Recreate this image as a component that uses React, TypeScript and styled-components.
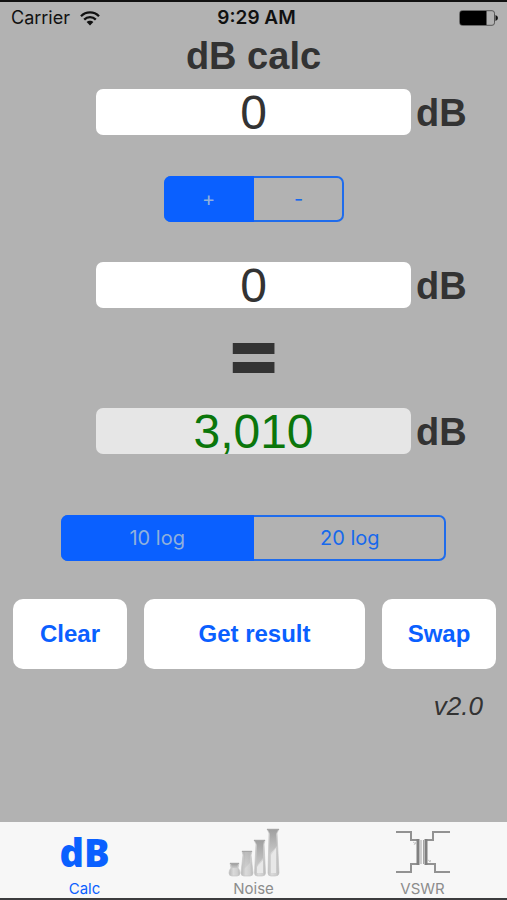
import React, { useState } from "react";
import styled, { createGlobalStyle } from "styled-components";

const blue = "#0a60ff";
const ink = "#333333";
const helvetica = `"Liberation Sans", Arial, sans-serif`;
const system = `Inter, Roboto, sans-serif`;
const humanist = `"Open Sans", "Noto Sans", sans-serif`;

const GlobalStyle = createGlobalStyle`
  * { box-sizing: border-box; }
  body { margin: 0; background: #b2b2b2; }
  button, input { font: inherit; }
`;

const Screen = styled.div`
  min-height: 100vh;
  display: flex;
  flex-direction: column;
  background: #b2b2b2;
  border-top: 2px solid #111111;
  border-bottom: 2px solid #3c3c3e;
  font-family: ${helvetica};
  color: ${ink};
`;

const StatusBar = styled.header`
  display: grid;
  grid-template-columns: 1fr auto 1fr;
  align-items: center;
  height: 32px;
  padding: 0 9px 0 11px;
  font: 400 18px/32px ${system};
  color: #111111;
`;

const Carrier = styled.div`
  display: flex;
  align-items: center;
  gap: 10px;
`;

const Clock = styled.time`
  padding-left: 4px;
  font-size: 19px;
  font-weight: 600;
`;

const BatteryIcon = styled.svg`
  justify-self: end;
`;

const Content = styled.main`
  flex: 1;
  display: flex;
  flex-direction: column;
  align-items: stretch;
`;

const Title = styled.h1`
  margin: 0;
  font-size: 38px;
  line-height: 44px;
  text-align: center;
`;

const FieldRow = styled.label`
  display: grid;
  grid-template-columns: 96fr 315fr 96fr;
  align-items: center;
  height: 46px;
`;

const ValueInput = styled.input<{ $result?: boolean }>`
  grid-column: 2;
  width: 100%;
  min-width: 0;
  height: 46px;
  padding: 0;
  border: 0;
  border-radius: 7px;
  background: ${(p) => (p.$result ? "#e6e6e6" : "#ffffff")};
  color: ${(p) => (p.$result ? "#0b760b" : ink)};
  font-size: 48px;
  line-height: 46px;
  text-align: center;
`;

const Unit = styled.span`
  padding: 2px 0 0 5px;
  font-size: 38px;
  font-weight: 700;
  line-height: 44px;
`;

const FirstField = styled.div`
  margin-top: 11px;
`;

const Equals = styled.div`
  height: 100px;
  font: 800 84px/96px ${humanist};
  text-align: center;
`;

const Segments = styled.fieldset<{ $width: string; $gap: string }>`
  display: flex;
  width: ${(p) => p.$width};
  height: 46px;
  margin: ${(p) => p.$gap};
  padding: 0;
  border: 0;
  border-radius: 7px;
  box-shadow: inset 0 0 0 2px #1f6cec;
  overflow: hidden;
`;

const Segment = styled.label<{ $active: boolean }>`
  flex: 1;
  display: flex;
  align-items: center;
  justify-content: center;
  background: ${(p) => (p.$active ? blue : "transparent")};
  color: ${(p) => (p.$active ? "#8fb0dc" : "#1769ec")};
  font: 400 20px/24px ${system};
  cursor: pointer;
`;

const SegmentInput = styled.input`
  appearance: none;
  width: 0;
  height: 0;
  margin: 0;
`;

const Actions = styled.div`
  display: grid;
  grid-template-columns: 114fr 221fr 114fr;
  column-gap: 17px;
  padding: 0 11px 0 13px;
`;

const ActionButton = styled.button`
  height: 70px;
  padding: 0;
  border: 0;
  border-radius: 10px;
  background: #ffffff;
  color: ${blue};
  font-size: 24px;
  font-weight: 700;
  cursor: pointer;
`;

const Version = styled.p`
  margin: 21px 24px 0 0;
  font-size: 26px;
  font-style: italic;
  line-height: 32px;
  text-align: right;
`;

const TabBar = styled.nav`
  display: grid;
  grid-template-columns: repeat(3, 1fr);
  height: 76px;
  background: #f7f7f7;
`;

const Tab = styled.a<{ $active?: boolean }>`
  display: flex;
  flex-direction: column;
  align-items: center;
  color: ${(p) => (p.$active ? blue : "#8c8c8c")};
  font: 400 15px/18px ${system};
  text-decoration: none;
`;

const TabIcon = styled.span`
  display: flex;
  align-items: center;
  justify-content: center;
  height: 58px;
  padding-top: 2px;
  font: 800 38px/46px ${humanist};
`;

type SwitchProps = {
  name: string;
  legend: string;
  options: string[];
  width: string;
  gap: string;
};

function Switcher({ name, legend, options, width, gap }: SwitchProps) {
  const [value, setValue] = useState(options[0]);
  return (
    <Segments $width={width} $gap={gap} aria-label={legend}>
      {options.map((option) => (
        <Segment key={option} $active={option === value}>
          <SegmentInput
            type="radio"
            name={name}
            checked={option === value}
            onChange={() => setValue(option)}
          />
          {option}
        </Segment>
      ))}
    </Segments>
  );
}

function WifiIcon() {
  return (
    <svg width="20" height="15" viewBox="0 0 20 15" aria-hidden="true">
      <g fill="none" stroke="#111" strokeWidth="2.3">
        <path d="M1 5.2C6 .2 14 .2 19 5.2" />
        <path d="M4.2 8.6C7.4 5.3 12.6 5.3 15.8 8.6" />
      </g>
      <path d="M6.6 11C8.4 9.2 11.6 9.2 13.4 11L10 14.5Z" fill="#111" />
    </svg>
  );
}

function Battery() {
  return (
    <BatteryIcon width="39" height="16" viewBox="0 0 39 16" aria-hidden="true">
      <rect x=".7" y=".7" width="34.8" height="14.6" rx="2.5" fill="none" stroke="#555" />
      <path d="M3 1H27.5V15H3Q1 15 1 13V3Q1 1 3 1Z" fill="#000" />
      <path d="M36.5 5Q39 6 39 8T36.5 11Z" fill="#111" />
    </BatteryIcon>
  );
}

function FlasksIcon() {
  return (
    <svg width="52" height="50" viewBox="0 0 52 50" aria-hidden="true">
      <defs>
        <linearGradient id="glass" x1="0" x2="1">
          <stop offset="0" stopColor="#b6b6b6" />
          <stop offset=".4" stopColor="#dadada" />
          <stop offset=".75" stopColor="#cfcfcf" />
          <stop offset="1" stopColor="#b5b5b5" />
        </linearGradient>
        <linearGradient id="shade" x1="0" x2="0" y1="0" y2="1">
          <stop offset="0" stopColor="#a0a0a0" />
          <stop offset="1" stopColor="#cacaca" />
        </linearGradient>
      </defs>
      <g fill="url(#glass)" stroke="#c6c6c6" strokeWidth=".7">
        <path d="M2 36H11L10 41Q12 43 12 46Q12 49 9 49H4Q1 49 1 46Q1 43 3 41Z" />
        <path d="M14 24H24L23 28L25 46Q25 49 22 49H16Q13 49 13 46L15 28Z" />
        <path d="M26 13H37L36 17L37.500 46Q37.500 49 34 49H29.500Q26.500 49 26.500 46L28 17Z" />
        <path d="M39 2H51L49 6L51 46Q51 49 47 49H43Q40 49 40 46L41 6Z" />
      </g>
      <g fill="url(#shade)">
        <path d="M3 37H10L9 41H4Z" />
        <path d="M15 25H23L22 29V36L15 43L16 29Z" opacity=".5" />
        <path d="M27 14H36L35 18V31L28 40L29 18Z" />
        <path d="M40 3H50L48 7L49 19L41 28L42 7Z" />
      </g>
      <path d="M29 40L35 33V46H29ZM43 28L48 21V46H43Z" fill="#e8e8e8" />
      <path d="M2 36.500H11M14 24.500H24M26 13.500H37M39 2.500H51" stroke="#a6a6a6" />
    </svg>
  );
}

function TransformerIcon() {
  return (
    <svg width="54" height="44" viewBox="0 0 54 44" aria-hidden="true">
      <g fill="none" stroke="#929292" strokeWidth="2">
        <path d="M0 2H15V10H22V34H15V42H0" />
        <path d="M54 2H37V10H30V34H39V42H54" />
      </g>
      <path d="M22 9V35M30 9V35" stroke="#808080" strokeWidth="3" />
      <path d="M25 10V34M27.500 10V34" stroke="#a5a5a5" strokeWidth="1" />
      <path d="M17 12L20 14M20 12L18 15M32 30L35 32M35 30L33 32" stroke="#bbb" strokeWidth=".8" />
    </svg>
  );
}

export default function App() {
  const [first, setFirst] = useState("0");
  const [second, setSecond] = useState("0");
  const [result, setResult] = useState("3,010");

  const clear = () => {
    setFirst("0");
    setSecond("0");
    setResult("0");
  };
  const swap = () => {
    setFirst(second);
    setSecond(first);
  };
  const calculate = () => {
    const sum = 10 ** (Number(first) / 10) + 10 ** (Number(second) / 10);
    setResult((10 * Math.log10(sum)).toFixed(3).replace(".", ","));
  };

  return (
    <>
      <GlobalStyle />
      <Screen>
        <StatusBar>
          <Carrier>
            Carrier
            <WifiIcon />
          </Carrier>
          <Clock>9:29 AM</Clock>
          <Battery />
        </StatusBar>
        <Content>
          <Title>dB calc</Title>
          <FirstField>
            <FieldRow>
              <ValueInput value={first} onChange={(e) => setFirst(e.target.value)} />
              <Unit>dB</Unit>
            </FieldRow>
          </FirstField>
          <Switcher
            name="sign"
            legend="Operation"
            options={["+", "-"]}
            width="180px"
            gap="41px auto 40px"
          />
          <FieldRow>
            <ValueInput value={second} onChange={(e) => setSecond(e.target.value)} />
            <Unit>dB</Unit>
          </FieldRow>
          <Equals>=</Equals>
          <FieldRow>
            <ValueInput $result readOnly value={result} />
            <Unit>dB</Unit>
          </FieldRow>
          <Switcher
            name="scale"
            legend="Scale"
            options={["10 log", "20 log"]}
            width="76%"
            gap="61px auto 38px"
          />
          <Actions>
            <ActionButton type="button" onClick={clear}>Clear</ActionButton>
            <ActionButton type="button" onClick={calculate}>Get result</ActionButton>
            <ActionButton type="button" onClick={swap}>Swap</ActionButton>
          </Actions>
          <Version>v2.0</Version>
        </Content>
        <TabBar>
          <Tab href="#calc" $active aria-current="page">
            <TabIcon aria-hidden="true">dB</TabIcon>
            Calc
          </Tab>
          <Tab href="#noise">
            <TabIcon><FlasksIcon /></TabIcon>
            Noise
          </Tab>
          <Tab href="#vswr">
            <TabIcon><TransformerIcon /></TabIcon>
            VSWR
          </Tab>
        </TabBar>
      </Screen>
    </>
  );
}
